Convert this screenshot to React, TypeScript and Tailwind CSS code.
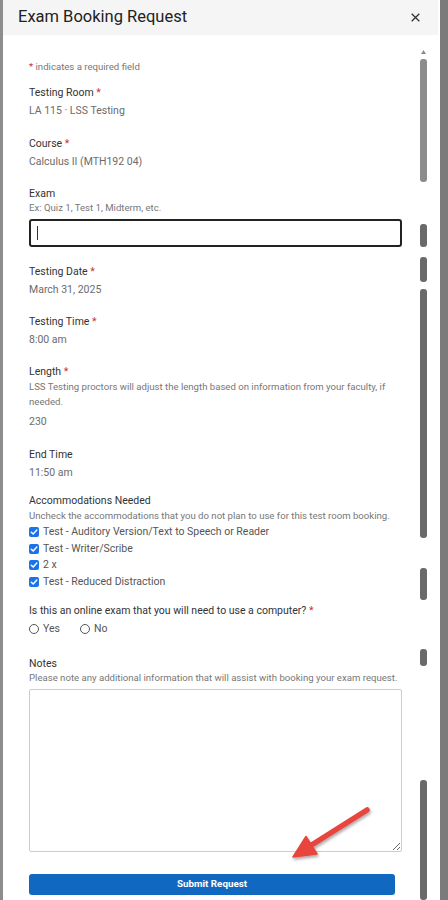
import type { ReactNode } from "react";

const FONT = "font-['Roboto','Liberation_Sans',sans-serif]";

function Req() {
  return <span className="text-[#c9302c]"> *</span>;
}

function Label({ children, required }: { children: ReactNode; required?: boolean }) {
  return (
    <div className="text-[10.5px] leading-[14px] text-[#333]">
      {children}
      {required && <Req />}
    </div>
  );
}

function Value({ children }: { children: ReactNode }) {
  return <div className="mt-[4px] text-[10.5px] leading-[14px] text-[#6b6b6b]">{children}</div>;
}

function Help({ children, className = "" }: { children: ReactNode; className?: string }) {
  return <div className={`text-[9.6px] leading-[12px] text-[#777] ${className}`}>{children}</div>;
}

function Check({ label }: { label: string }) {
  return (
    <div className="flex h-[16.5px] items-center gap-[4px]">
      <span className="flex h-[10px] w-[10px] items-center justify-center rounded-[2px] bg-[#1a73e8]">
        <svg width="8" height="8" viewBox="0 0 8 8" aria-hidden>
          <path d="M1.3 4.2 L3.2 6 L6.8 2" fill="none" stroke="#fff" strokeWidth="1.5" strokeLinecap="round" strokeLinejoin="round" />
        </svg>
      </span>
      <span className="text-[10.5px] text-[#555]">{label}</span>
    </div>
  );
}

function Radio({ label }: { label: string }) {
  return (
    <label className="flex items-center gap-[4px]">
      <span className="h-[10px] w-[10px] rounded-full border border-[#555] bg-white" />
      <span className="text-[10.5px] text-[#555]">{label}</span>
    </label>
  );
}

/** the glitchy scrollbar in the capture, drawn as-is */
function Scrollbar() {
  const top = 35;
  const segs: [number, number, string][] = [
    [59, 182, "#8c8c8c"],
    [224, 247, "#6a6a6a"],
    [257, 282, "#6a6a6a"],
    [289, 538, "#6a6a6a"],
    [568, 600, "#6a6a6a"],
    [649, 666, "#6a6a6a"],
    [780, 900, "#6a6a6a"],
  ];
  return (
    <svg width="7" height={900 - top} className="shrink-0" aria-hidden>
      <path d={`M3.5 ${50 - top} L6 ${54 - top} L1 ${54 - top} Z`} fill="#8c8c8c" />
      {segs.map(([a, b, c], i) => (
        <rect key={i} x="0" y={a - top} width="7" height={b - a} rx="3" fill={c} />
      ))}
    </svg>
  );
}

function Arrow() {
  return (
    <svg className="pointer-events-none absolute left-0 top-0" width="448" height="900" aria-hidden>
      <defs>
        <filter id="arrow-shadow" x="-20%" y="-20%" width="140%" height="140%">
          <feDropShadow dx="1" dy="2" stdDeviation="1.5" floodColor="#000" floodOpacity="0.35" />
        </filter>
      </defs>
      <g filter="url(#arrow-shadow)">
        <line x1="367" y1="810" x2="310" y2="846" stroke="#e8443d" strokeWidth="5.5" strokeLinecap="round" />
        <path d="M293 857 L317 854 L306 836.5 Z" fill="#e8443d" stroke="#e8443d" strokeWidth="1.5" strokeLinejoin="round" />
      </g>
    </svg>
  );
}

export default function App() {
  return (
    <div className={`relative flex h-[900px] w-[448px] overflow-hidden bg-[#7b7b7b] ${FONT}`}>
      <div className="w-[3px] shrink-0 bg-[#8d8d8d]" />
      <div className="flex w-[435px] shrink-0 flex-col bg-white">
        <div className="flex h-[35px] shrink-0 items-center justify-between bg-[#f5f5f5] pl-[15px] pr-[18px]">
          <h1 className="text-[16.5px] font-normal text-[#222]">Exam Booking Request</h1>
          <svg width="9" height="9" viewBox="0 0 9 9" aria-hidden>
            <path d="M0.7 0.7 L8.3 8.3 M8.3 0.7 L0.7 8.3" stroke="#333" strokeWidth="1.3" />
          </svg>
        </div>
        <div className="flex min-h-0 flex-1">
          <div className="w-[417px] shrink-0 pl-[26px] pr-[15px] pt-[26px]">
            <Help className="text-[#666]">
              <span className="text-[#c9302c]">*</span> indicates a required field
            </Help>

            <div className="mt-[13px]">
              <Label required>Testing Room</Label>
              <Value>LA 115 · LSS Testing</Value>
            </div>
            <div className="mt-[19px]">
              <Label required>Course</Label>
              <Value>Calculus II (MTH192 04)</Value>
            </div>
            <div className="mt-[18px]">
              <Label>Exam</Label>
              <Help className="mt-[1px]">Ex: Quiz 1, Test 1, Midterm, etc.</Help>
              <div className="mt-[5px] flex h-[28px] w-[373px] items-center rounded-[3px] border-2 border-[#222] px-[6px]">
                <span className="h-[14px] w-px bg-[#333]" />
              </div>
            </div>
            <div className="mt-[18px]">
              <Label required>Testing Date</Label>
              <Value>March 31, 2025</Value>
            </div>
            <div className="mt-[18px]">
              <Label required>Testing Time</Label>
              <Value>8:00 am</Value>
            </div>
            <div className="mt-[18px]">
              <Label required>Length</Label>
              <div className="text-[9.6px] leading-[15px] text-[#777]">
                LSS Testing proctors will adjust the length based on information from your faculty, if needed.
              </div>
              <div className="mt-[6px] text-[10.5px] leading-[14px] text-[#6b6b6b]">230</div>
            </div>
            <div className="mt-[19px]">
              <Label>End Time</Label>
              <Value>11:50 am</Value>
            </div>
            <div className="mt-[14px]">
              <Label>Accommodations Needed</Label>
              <Help className="mt-[2px]">
                Uncheck the accommodations that you do not plan to use for this test room booking.
              </Help>
              <div className="mt-[2px] flex flex-col">
                <Check label="Test - Auditory Version/Text to Speech or Reader" />
                <Check label="Test - Writer/Scribe" />
                <Check label="2 x" />
                <Check label="Test - Reduced Distraction" />
              </div>
            </div>
            <div className="mt-[14px]">
              <Label required>Is this an online exam that you will need to use a computer?</Label>
              <div className="mt-[3px] flex gap-[20px]">
                <Radio label="Yes" />
                <Radio label="No" />
              </div>
            </div>
            <div className="mt-[20px]">
              <Label>Notes</Label>
              <Help className="mt-[1px]">
                Please note any additional information that will assist with booking your exam request.
              </Help>
              <textarea className="mt-[5px] block h-[163px] w-[373px] resize-y rounded-[2px] border border-[#ccc] outline-none" />
            </div>
            <button className="mt-[22px] flex h-[21px] w-[366px] items-center justify-center rounded-[3px] bg-[#1168c0] text-[9.8px] font-bold text-white">
              Submit Request
            </button>
          </div>
          <Scrollbar />
        </div>
      </div>
      <div className="w-[2px] shrink-0 bg-white" />
      <div className="flex-1 bg-[#7b7b7b]" />
      <Arrow />
    </div>
  );
}
